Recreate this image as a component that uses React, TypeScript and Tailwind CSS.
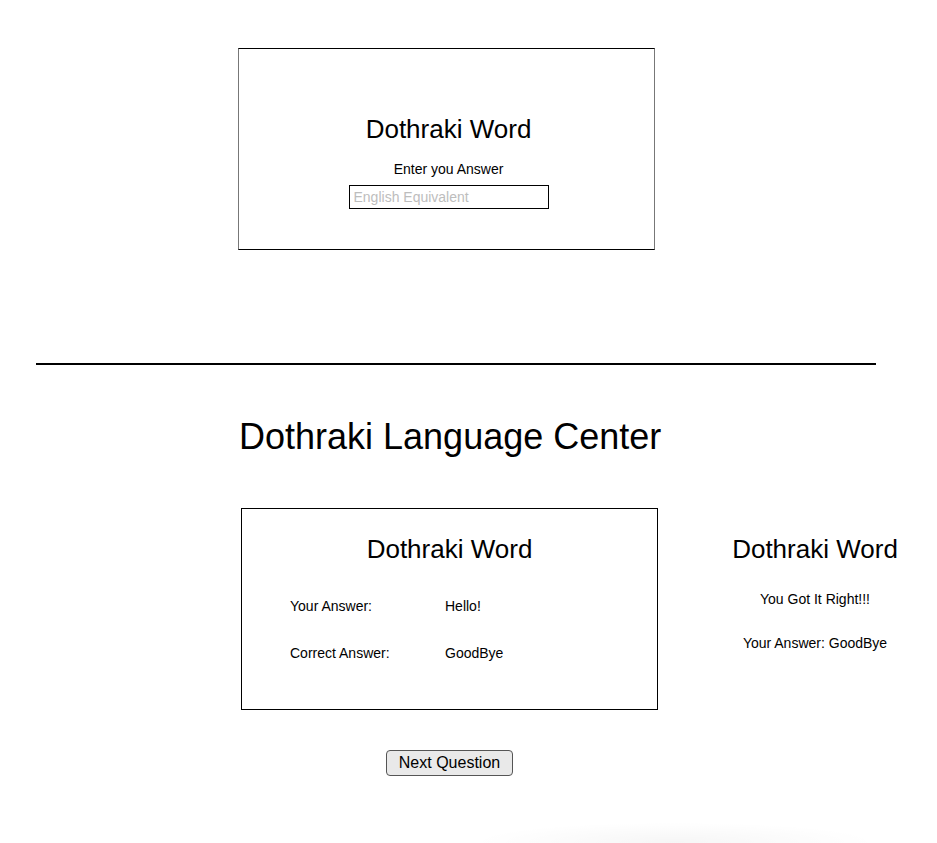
import React from "react";

export default function App() {
  return (
    <div
      className="relative w-[937px] h-[843px] bg-white text-black overflow-hidden"
      style={{ fontFamily: '"Liberation Sans", Arial, Helvetica, sans-serif' }}
    >
      {/* Top quiz card */}
      <div className="pt-[48px] pl-[238px]">
        <div className="w-[417px] h-[202px] border-y border-y-black border-x border-x-[#777] flex flex-col items-center pt-[65px] pl-[4px]">
          <div className="text-[26px] leading-[30px]">Dothraki Word</div>
          <div className="mt-[17px] text-[14px] leading-[16px]">Enter you Answer</div>
          <input
            className="mt-[8px] w-[200px] h-[24px] border border-black px-[4px] text-[14px] outline-none placeholder:text-[#bdbdbd]"
            placeholder="English Equivalent"
          />
        </div>
      </div>

      {/* Divider */}
      <div className="mt-[113px] ml-[36px] w-[840px] h-[2px] bg-black" />

      {/* Title */}
      <div className="mt-[52px] pl-[239px] text-[36px] leading-[40px]">Dothraki Language Center</div>

      {/* Results row */}
      <div className="mt-[51px] flex flex-row items-start pl-[241px]">
        <div className="w-[417px] h-[202px] border border-black flex flex-col">
          <div className="pt-[25px] text-center text-[26px] leading-[30px]">Dothraki Word</div>
          <div className="mt-[34px] pl-[48px] flex text-[14px] leading-[16px]">
            <div className="w-[155px]">Your Answer:</div>
            <div>Hello!</div>
          </div>
          <div className="mt-[31px] pl-[48px] flex text-[14px] leading-[16px]">
            <div className="w-[155px]">Correct Answer:</div>
            <div>GoodBye</div>
          </div>
        </div>
        <div className="ml-[57px] w-[200px] flex flex-col items-center pt-[26px]">
          <div className="text-[26px] leading-[30px] whitespace-nowrap">Dothraki Word</div>
          <div className="mt-[27px] text-[14px] leading-[16px] whitespace-nowrap">You Got It Right!!!</div>
          <div className="mt-[28px] text-[14px] leading-[16px] whitespace-nowrap">Your Answer: GoodBye</div>
        </div>
      </div>

      {/* Button */}
      <div className="mt-[40px] pl-[386px]">
        <button className="w-[127px] h-[26px] rounded-[4px] border border-[#555] bg-[#e9e9e9] text-[16px] leading-[20px] text-black">
          Next Question
        </button>
      </div>

      {/* faint shadow at bottom */}
      <div className="absolute left-[470px] top-[822px] w-[410px] h-[40px] bg-[radial-gradient(ellipse_at_center,rgba(0,0,0,0.035),transparent_70%)]" />
    </div>
  );
}
